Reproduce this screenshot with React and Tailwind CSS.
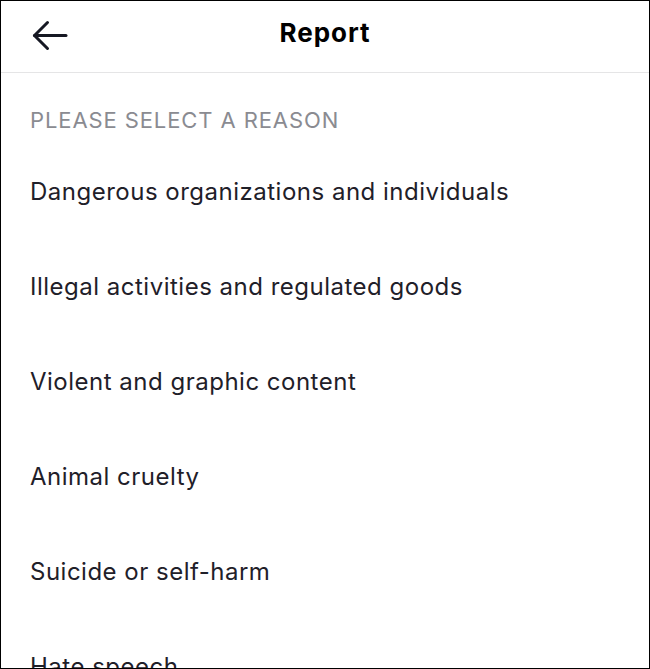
import React from "react";

const items = [
  "Dangerous organizations and individuals",
  "Illegal activities and regulated goods",
  "Violent and graphic content",
  "Animal cruelty",
  "Suicide or self-harm",
  "Hate speech",
];

export default function App() {
  return (
    <div
      className="w-[650px] h-[669px] bg-white border border-black overflow-hidden box-border"
      style={{ fontFamily: "Inter, 'Noto Sans', sans-serif" }}
    >
      <div className="relative h-[72px] border-b border-[#e5e5e6] flex justify-center pt-[17px]">
        <svg
          className="absolute left-[31px] top-[19px]"
          width="36"
          height="31"
          viewBox="0 0 36 31"
          fill="none"
          stroke="#161823"
          strokeWidth="3"
          strokeLinecap="round"
          strokeLinejoin="round"
        >
          <path d="M2.5 15.5H34" />
          <path d="M15.5 2.5L2.5 15.5L15.5 28.5" />
        </svg>
        <span className="text-[26px] font-bold text-black leading-[30px] tracking-[1px]">Report</span>
      </div>
      <div className="h-[71px] pt-[32px] pl-[29px] text-[22px] leading-[30px] text-[#8a8b91] tracking-[0.9px]">
        PLEASE SELECT A REASON
      </div>
      <div className="flex flex-col">
        {items.map((t) => (
          <div
            key={t}
            className="h-[95px] shrink-0 flex items-center pl-[29px] text-[24px] text-[#1f2029] tracking-[0.5px]"
          >
            {t}
          </div>
        ))}
      </div>
    </div>
  );
}
